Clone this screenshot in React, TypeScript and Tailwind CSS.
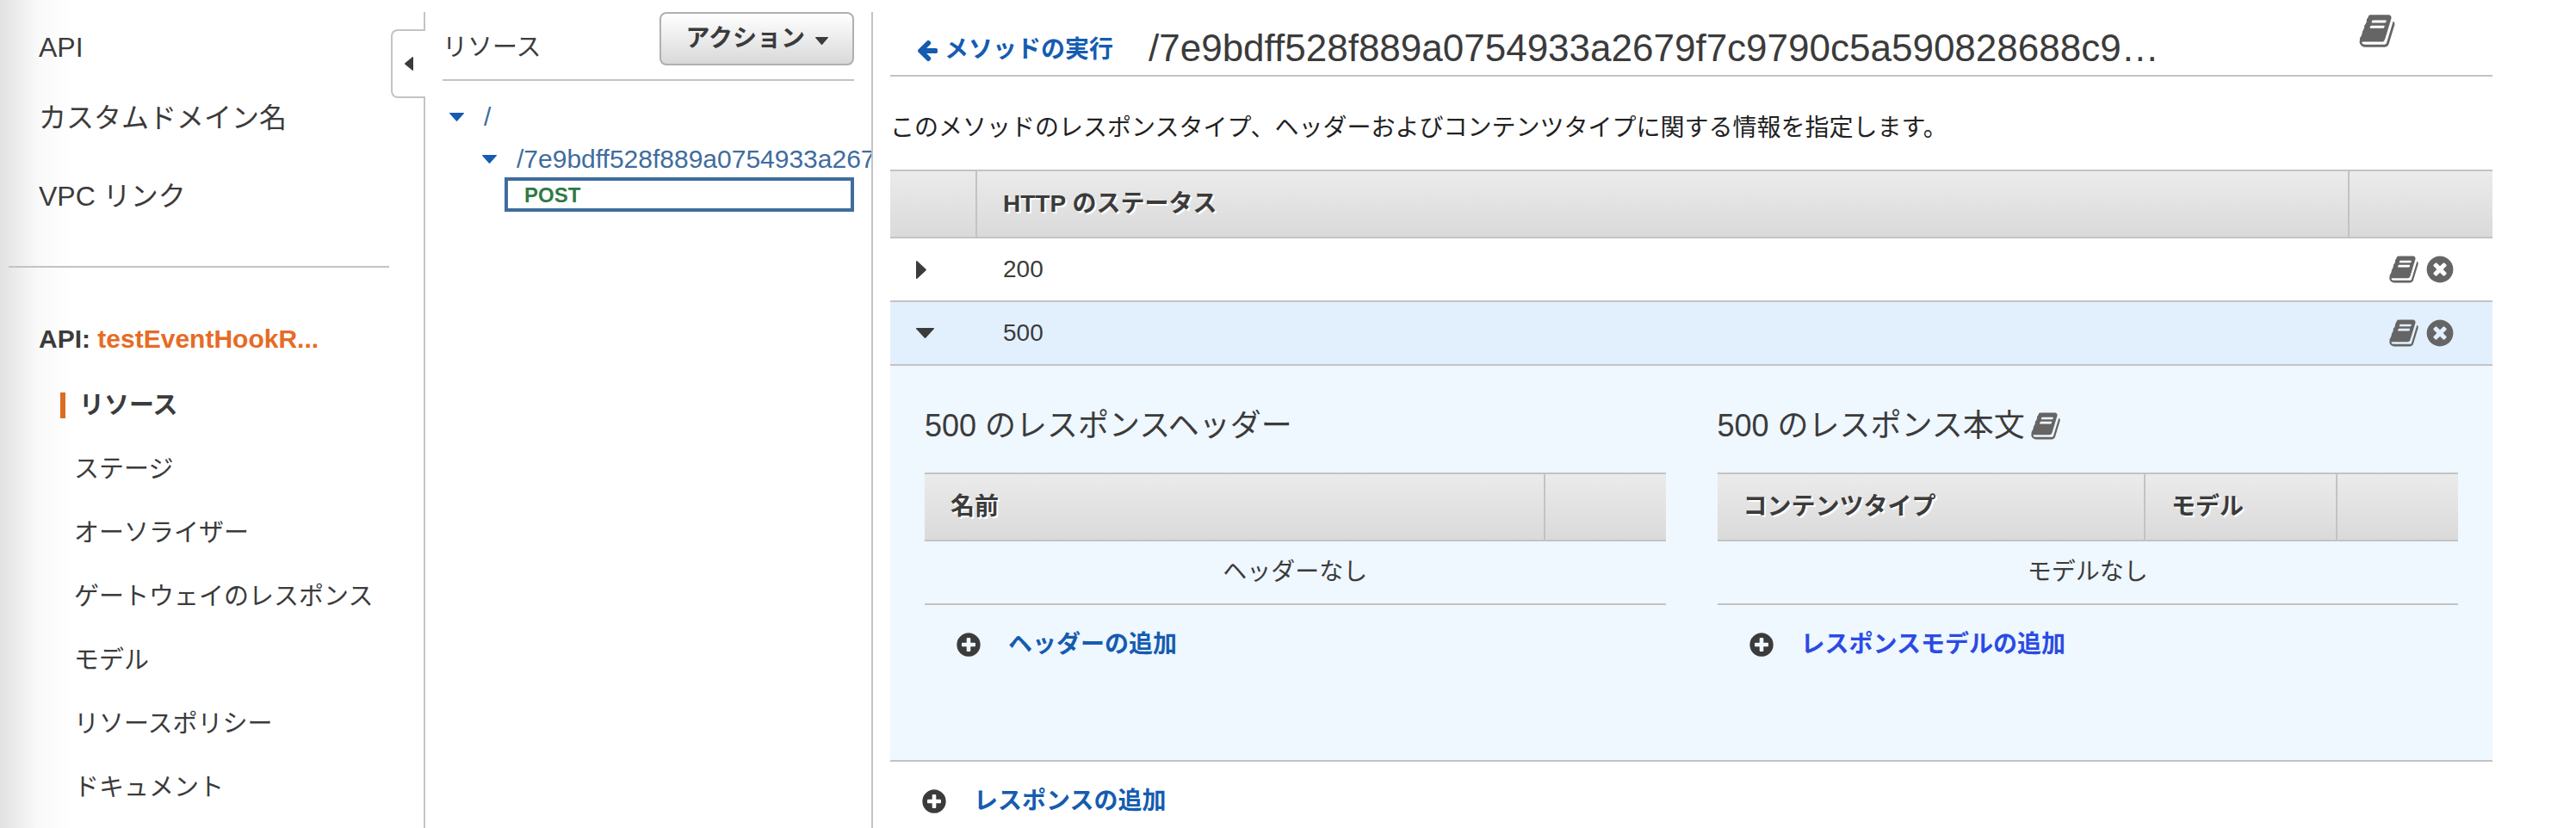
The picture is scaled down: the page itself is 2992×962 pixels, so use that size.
import type { ReactNode } from "react";

const CIRCLE =
  "q0 209-103 385.5t-279.5 279.5-385.5 103-385.5-103-279.5-279.5-103-385.5 103-385.5 279.5-279.5 385.5-103 385.5 103 279.5 279.5 103 385.5z";

const ICONS = {
  book: "M1703 478q40 57 18 129l-275 906q-19 64-76.5 107.5t-122.5 43.5h-923q-77 0-148.5-53.5t-99.5-131.5q-24-67-2-127 0-4 3-27t4-37q1-8-3-21.5t-3-19.5q2-11 8-21t16.5-23.5 16.5-23.5q23-38 45-91.5t30-91.5q3-10 .5-30t-.5-28q3-11 17-28t17-23q21-36 42-92t25-90q1-9-2.5-32t.5-28q4-13 22-30.5t22-22.5q19-26 42.5-84.5t27.5-96.5q1-8-3-25.5t-2-26.5q2-8 9-18t18-23 17-21q8-12 16.5-30.5t15-35 16-36 19.5-32 26.5-23.5 36-11.5 47.5 5.5l-1 3q38-9 51-9h761q74 0 114 56t18 130l-274 906q-36 119-71.5 153.5t-128.5 34.5h-869q-27 0-38 15-11 16-1 43 24 70 144 70h923q29 0 56-15.5t35-41.5l300-987q7-22 5-57 38 15 59 43zm-1064 2q-4 13 2 22.5t20 9.5h608q13 0 25.5-9.5t16.5-22.5l21-64q4-13-2-22.5t-20-9.5h-608q-13 0-25.5 9.5t-16.5 22.5zm-83 256q-4 13 2 22.5t20 9.5h608q13 0 25.5-9.5t16.5-22.5l21-64q4-13-2-22.5t-20-9.5h-608q-13 0-25.5 9.5t-16.5 22.5z",
  remove:
    "M1277 1122q0-26-19-45l-181-181 181-181q19-19 19-45 0-27-19-46l-90-90q-19-19-46-19-26 0-45 19l-181 181-181-181q-19-19-45-19-27 0-46 19l-90 90q-19 19-19 46 0 26 19 45l181 181-181 181q-19 19-19 45 0 27 19 46l90 90q19 19 46 19 26 0 45-19l181-181 181 181q19 19 45 19 27 0 46-19l90-90q19-19 19-46zm387-226" +
    CIRCLE,
  add:
    "M1344 960v-128q0-26-19-45t-45-19h-256v-256q0-26-19-45t-45-19h-128q-26 0-45 19t-19 45v256h-256q-26 0-45 19t-19 45v128q0 26 19 45t45 19h256v256q0 26 19 45t45 19h128q26 0 45-19t19-45v-256h256q26 0 45-19t19-45zm320-64" +
    CIRCLE,
  back: "M1664 896v128q0 53-32.5 90.5t-84.5 37.5h-704l293 294q38 36 38 90t-38 90l-75 76q-37 37-90 37-52 0-91-37l-651-652q-37-37-37-90 0-52 37-91l651-650q38-38 91-38 52 0 90 38l75 74q38 38 38 91t-38 91l-293 293h704q52 0 84.5 37.5t32.5 90.5z",
};

function Icon({ name, className }: { name: keyof typeof ICONS; className: string }) {
  return (
    <svg viewBox="0 0 1792 1792" fill="currentColor" aria-hidden="true" className={"shrink-0 " + className}>
      <path d={ICONS[name]} />
    </svg>
  );
}

function CaretDown({ className }: { className: string }) {
  return (
    <svg viewBox="0 0 20 12" fill="currentColor" preserveAspectRatio="none" aria-hidden="true" className={"shrink-0 " + className}>
      <path d="M0.6 0H19.4Q20.4 0.3 19.7 1.3L10.8 11.5Q10 12.3 9.2 11.5L0.3 1.3Q-0.4 0.3 0.6 0z" />
    </svg>
  );
}

function CaretRight({ className }: { className: string }) {
  return (
    <svg viewBox="0 0 12 20" fill="currentColor" preserveAspectRatio="none" aria-hidden="true" className={"shrink-0 " + className}>
      <path d="M0 0.6V19.4Q0.3 20.4 1.3 19.7L11.5 10.8Q12.3 10 11.5 9.2L1.3 0.3Q0.3 -0.4 0 0.6z" />
    </svg>
  );
}

const HEAD =
  "h-20 border-y-2 border-[#c3c3c3] bg-linear-to-b from-[#ebebeb] to-[#dadada] text-left font-bold [text-shadow:2px_2px_0_#fff]";

function AddLink({ children, color }: { children: ReactNode; color: string }) {
  return (
    <a href="#" className="mt-[22px] flex h-12 items-center gap-[30px] pl-[35px] font-bold">
      <Icon name="add" className="size-8" />
      <span className={color}>{children}</span>
    </a>
  );
}

const API_PAGES = ["ステージ", "オーソライザー", "ゲートウェイのレスポンス", "モデル", "リソースポリシー", "ドキュメント"];

function Sidebar() {
  return (
    <nav className="relative w-[494px] shrink-0 bg-linear-to-r from-[#e2e2e2] via-[#f9f9f9] via-[44px] to-white to-[84px] pt-[14px]">
      <div className="min-h-full border-r-2 border-[#c3c3c3]">
        <div className="flex flex-col pt-[17px] pl-[45px] text-[32px] leading-12">
          <a href="#">API</a>
          <a href="#" className="mt-[34px]">カスタムドメイン名</a>
          <a href="#" className="mt-[43px]">VPC リンク</a>
        </div>
        <hr className="mt-[57px] mr-10 ml-[10px] border-t-2 border-[#c3c3c3]" />
        <p className="mt-[59px] pl-[45px] text-[30px] leading-12 font-bold">
          API: <a href="#" className="text-[#e66b25]">testEventHookR...</a>
        </p>
        <ul className="mt-4 text-[29px]">
          <li className="flex h-[74px] items-center pl-[70px] font-bold">
            <a href="#" aria-current="page" className="border-l-6 border-[#dd6b20] pl-4 leading-[30px]">リソース</a>
          </li>
          {API_PAGES.map((page) => (
            <li key={page} className="flex h-[74px] items-center pl-[86px]">
              <a href="#">{page}</a>
            </li>
          ))}
        </ul>
      </div>
      <button
        type="button"
        aria-label="メニューを閉じる"
        className="absolute top-[34px] right-0 flex h-20 w-10 items-center rounded-l-lg border-2 border-r-0 border-[#c3c3c3] bg-white pl-[14px]"
      >
        <CaretRight className="h-4 w-[10px] rotate-180" />
      </button>
    </nav>
  );
}

function ResourceTree() {
  return (
    <section className="w-[520px] shrink-0 pt-[14px]">
      <div className="min-h-full overflow-hidden border-r-2 border-[#c3c3c3] pl-5">
        <div className="mr-5 flex h-20 items-center justify-between border-b-2 border-[#c3c3c3]">
          <h2 className="pt-1 text-[29px]">リソース</h2>
          <button
            type="button"
            className="mb-4 flex h-[62px] items-center gap-3 rounded-lg border-2 border-[#b0b0b0] bg-linear-to-b from-white to-[#d9d9d9] px-7 font-bold"
          >
            アクション
            <CaretDown className="mt-1 h-[9px] w-[15px]" />
          </button>
        </div>
        <div className="pt-4 text-[#3f6c9f]">
          <a href="#" className="flex h-[52px] items-center gap-[23px] pl-2 text-[30px]">
            <CaretDown className="h-[10px] w-[17px] text-[#155cb0]" />/
          </a>
          <a href="#" className="flex h-11 items-center gap-[23px] pt-[2px] pl-[46px] text-[30px]">
            <CaretDown className="h-[10px] w-[17px] text-[#155cb0]" />
            <span>/7e9bdff528f889a0754933a2679f7c9790c5a590828688c9</span>
          </a>
          <a
            href="#"
            className="mr-5 ml-[72px] flex h-10 items-center border-4 border-[#3f6c9f] pt-[2px] pl-[19px] text-2xl font-bold text-[#2f7a46]"
          >
            POST
          </a>
        </div>
      </div>
    </section>
  );
}

function StatusRow({ code, open }: { code: string; open?: boolean }) {
  return (
    <tr className={open ? "bg-[#e2f0fe]" : "bg-white"}>
      <td className="h-[74px] border-b-2 border-[#c3c3c3] pl-[30px]">
        <button type="button" aria-label={code} aria-expanded={!!open} className="flex items-center">
          {open ? <CaretDown className="h-3 w-[21px]" /> : <CaretRight className="h-[21px] w-3" />}
        </button>
      </td>
      <td className="border-b-2 border-[#c3c3c3] pl-[30px]">{code}</td>
      <td className="border-b-2 border-[#c3c3c3] pr-[43px]">
        <div className="flex justify-end gap-[6px] text-[#656565]">
          <button type="button" aria-label="ドキュメント"><Icon name="book" className="size-9" /></button>
          <button type="button" aria-label="削除"><Icon name="remove" className="size-9" /></button>
        </div>
      </td>
    </tr>
  );
}

function ResponseDetail() {
  return (
    <div className="grid grid-cols-2 gap-[60px] px-10 pt-[46px] pb-[110px]">
      <section>
        <h2 className="mb-[30px] text-[36px] leading-12">500 のレスポンスヘッダー</h2>
        <table className="w-full table-fixed border-separate border-spacing-0">
          <thead>
            <tr>
              <th className={HEAD + " border-r-2 pl-[30px]"}>名前</th>
              <th className={HEAD + " w-[140px]"} />
            </tr>
          </thead>
          <tbody>
            <tr>
              <td colSpan={2} className="h-[74px] border-b-2 border-[#c3c3c3] text-center">ヘッダーなし</td>
            </tr>
          </tbody>
        </table>
        <AddLink color="text-[#155cb0]">ヘッダーの追加</AddLink>
      </section>
      <section>
        <h2 className="mb-[30px] flex items-center gap-[6px] text-[36px] leading-12">
          500 のレスポンス本文
          <Icon name="book" className="size-9 text-[#656565]" />
        </h2>
        <table className="w-full table-fixed border-separate border-spacing-0">
          <thead>
            <tr>
              <th className={HEAD + " border-r-2 pl-[30px]"}>コンテンツタイプ</th>
              <th className={HEAD + " w-[223px] border-r-2 pl-[30px]"}>モデル</th>
              <th className={HEAD + " w-[140px]"} />
            </tr>
          </thead>
          <tbody>
            <tr>
              <td colSpan={3} className="h-[74px] border-b-2 border-[#c3c3c3] text-center">モデルなし</td>
            </tr>
          </tbody>
        </table>
        <AddLink color="text-[#2b4be4]">レスポンスモデルの追加</AddLink>
      </section>
    </div>
  );
}

export default function App() {
  return (
    <div className="flex min-h-screen bg-white font-['Liberation_Sans','Noto_Sans_CJK_JP',sans-serif] text-[28px] leading-10 text-[#3b3b3b]">
      <Sidebar />
      <ResourceTree />
      <main className="min-w-0 flex-1 pt-[14px] pr-[97px] pl-5">
        <header className="flex h-[75px] items-start border-b-2 border-[#c3c3c3]">
          <a href="#" className="mt-5 flex shrink-0 items-center gap-[6px] pl-[29px] leading-12 font-bold text-[#155cb0]">
            <Icon name="back" className="size-7" />
            メソッドの実行
          </a>
          <h1 className="mt-[18px] ml-[41px] min-w-0 flex-1 truncate text-[44px] leading-12">
            /7e9bdff528f889a0754933a2679f7c9790c5a590828688c9…
          </h1>
          <button type="button" aria-label="ドキュメント" className="mr-[112px] text-[#656565]">
            <Icon name="book" className="size-11" />
          </button>
        </header>
        <p className="mt-9 mb-6 leading-12 text-[#222]">
          このメソッドのレスポンスタイプ、ヘッダーおよびコンテンツタイプに関する情報を指定します。
        </p>
        <table className="w-full table-fixed border-separate border-spacing-0">
          <thead>
            <tr>
              <th className={HEAD + " w-[101px] border-r-2"} />
              <th className={HEAD + " border-r-2 pl-[30px]"}>HTTP のステータス</th>
              <th className={HEAD + " w-[166px]"} />
            </tr>
          </thead>
          <tbody>
            <StatusRow code="200" />
            <StatusRow code="500" open />
            <tr className="bg-[#eff7ff]">
              <td colSpan={3} className="border-b-2 border-[#c3c3c3]">
                <ResponseDetail />
              </td>
            </tr>
          </tbody>
        </table>
        <AddLink color="text-[#155cb0]">レスポンスの追加</AddLink>
      </main>
    </div>
  );
}
